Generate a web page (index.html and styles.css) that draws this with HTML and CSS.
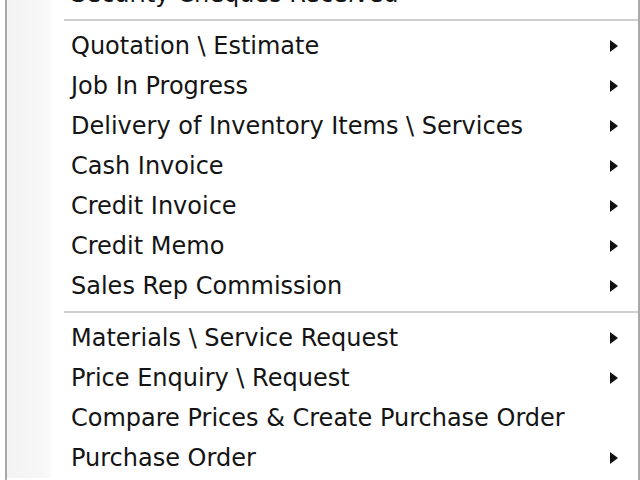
FILE: index.html
```html
<!DOCTYPE html>
<html>
<head>
<meta charset="utf-8">
<link rel="stylesheet" href="styles.css">
</head>
<body>
<div class="menu">
  <div class="gutter"></div>
  <ul class="items">
    <li class="item"><span class="label">Security Cheques Received</span><span class="arrow"></span></li>
    <li class="sep"></li>
    <li class="item"><span class="label">Quotation \ Estimate</span><span class="arrow"></span></li>
    <li class="item"><span class="label">Job In Progress</span><span class="arrow"></span></li>
    <li class="item"><span class="label">Delivery of Inventory Items \ Services</span><span class="arrow"></span></li>
    <li class="item"><span class="label">Cash Invoice</span><span class="arrow"></span></li>
    <li class="item"><span class="label">Credit Invoice</span><span class="arrow"></span></li>
    <li class="item"><span class="label">Credit Memo</span><span class="arrow"></span></li>
    <li class="item"><span class="label">Sales Rep Commission</span><span class="arrow"></span></li>
    <li class="sep"></li>
    <li class="item"><span class="label">Materials \ Service Request</span><span class="arrow"></span></li>
    <li class="item"><span class="label">Price Enquiry \ Request</span><span class="arrow"></span></li>
    <li class="item"><span class="label">Compare Prices &amp; Create Purchase Order</span></li>
    <li class="item"><span class="label">Purchase Order</span><span class="arrow"></span></li>
  </ul>
</div>
</body>
</html>
```
FILE: styles.css
```css
html, body {
  margin: 0;
  padding: 0;
  background: #ffffff;
  overflow: hidden;
  height: 480px;
}
.menu {
  display: flex;
  margin: -26px 0 0 5px;
  width: 631px;
  padding-bottom: 40px;
  border-left: 2px solid #a9a9a9;
  border-right: 2px solid #a9a9a9;
  background: #ffffff;
  font-family: "DejaVu Sans", Verdana, sans-serif;
  font-size: 24px;
  color: #141414;
}
.gutter {
  width: 44px;
  flex: none;
  background: linear-gradient(to right, #f3f3f3, #f7f7f7 80%, #fbfbfb);
}
.items {
  list-style: none;
  margin: 0;
  padding: 0;
  flex: 1;
}
.item {
  display: flex;
  align-items: center;
  justify-content: space-between;
  height: 40px;
  padding-left: 20px;
  padding-right: 20px;
}
.label {
  white-space: nowrap;
}
.arrow {
  width: 0;
  height: 0;
  border-top: 6px solid transparent;
  border-bottom: 6px solid transparent;
  border-left: 8px solid #111;
}
.sep {
  height: 12px;
  display: flex;
  align-items: center;
  padding-left: 13px;
}
.sep::before {
  content: "";
  display: block;
  flex: 1;
  height: 2px;
  background: #cfcfcf;
  border-bottom: 1px solid #fff;
}
```
